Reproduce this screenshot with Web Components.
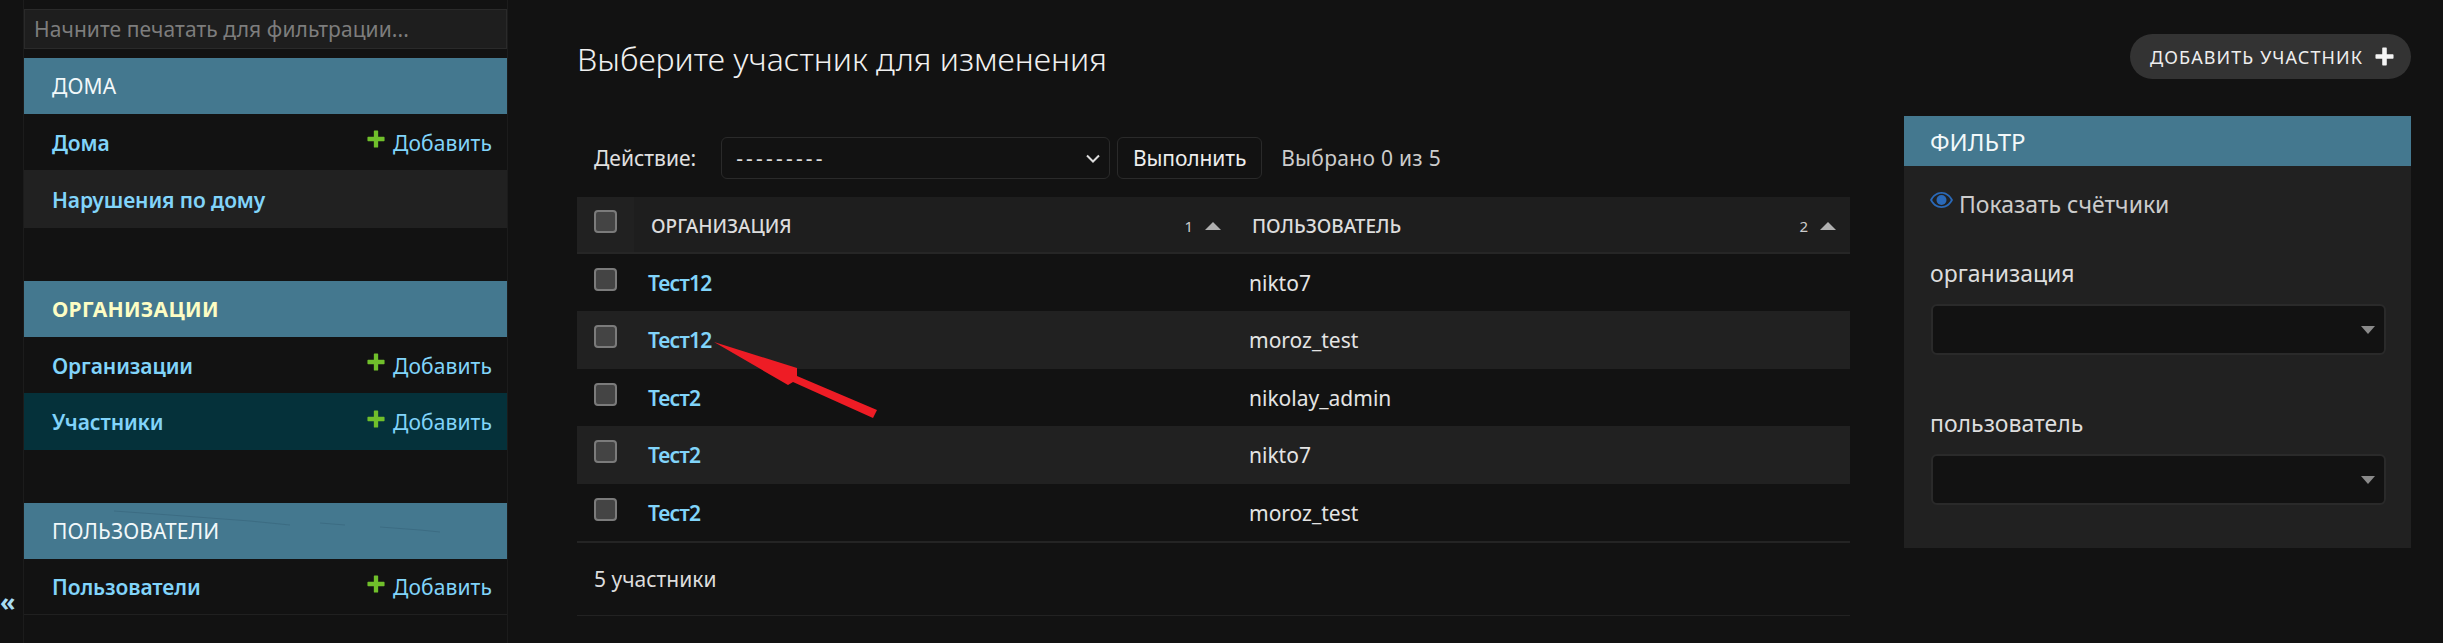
<!DOCTYPE html>
<html lang="ru"><head><meta charset="utf-8"><title>Участники</title>
<style>
html,body{margin:0;padding:0;background:#121212;}
body{width:2443px;height:643px;overflow:hidden;font-family:"Noto Sans","Open Sans",sans-serif;color:#e0e0e0;position:relative}
</style></head><body>
<admin-app>
  <admin-sidebar slot="side">
    <side-module title="ДОМА">
      <side-row label="Дома" add></side-row>
      <side-row label="Нарушения по дому" alt bold></side-row>
    </side-module>
    <side-module title="ОРГАНИЗАЦИИ" current>
      <side-row label="Организации" add></side-row>
      <side-row label="Участники" add selected></side-row>
    </side-module>
    <side-module title="ПОЛЬЗОВАТЕЛИ">
      <side-row label="Пользователи" add last></side-row>
    </side-module>
  </admin-sidebar>
  <page-header slot="head"></page-header>
  <change-list slot="list">
    <list-row org="Тест12" user="nikto7"></list-row>
    <list-row org="Тест12" user="moroz_test" alt></list-row>
    <list-row org="Тест2" user="nikolay_admin"></list-row>
    <list-row org="Тест2" user="nikto7" alt></list-row>
    <list-row org="Тест2" user="moroz_test"></list-row>
  </change-list>
  <filter-panel slot="filter"></filter-panel>
</admin-app>
<script>
const def=(n,html)=>customElements.define(n,class extends HTMLElement{
  connectedCallback(){ if(this.shadowRoot)return; const r=this.attachShadow({mode:'open'}); r.innerHTML=typeof html==='function'?html(this):html; }
});
const plus=(c,s)=>`<svg width="${s}" height="${s}" viewBox="0 0 20 20" style="display:block;flex:none"><path fill="${c}" d="M7.600 1.200c0-.4.3-.7.7-.7h3.400c.4 0 .7.3.7.7v6.400h6.400c.4 0 .7.3.7.7v3.400c0 .4-.3.7-.7.7h-6.400v6.400c0 .4-.3.7-.7.7H8.300c-.4 0-.7-.3-.7-.7v-6.400H1.200c-.4 0-.7-.3-.7-.7V8.300c0-.4.3-.7.7-.7h6.400z"/></svg>`;

def('admin-app',`<style>
:host{display:flex;height:643px;width:2443px;position:relative}
.toggle{width:24px;flex:none;display:flex;align-items:flex-end;box-sizing:border-box;padding-bottom:26px;font:700 25px/32px "Noto Sans",sans-serif;border-right:1px solid #1c1c1c}
.toggle span{color:#a8dcf2}
.side{width:484px;flex:none;box-sizing:border-box;border-right:1px solid #1c1c1c}
main{flex:1;box-sizing:border-box;padding:34px 32px 0 69px;display:flex;flex-direction:column}
.content{display:flex;gap:54px;margin-top:37px;align-items:flex-start}
.over{position:absolute;left:0;top:0;pointer-events:none}
</style>
<div class="toggle"><span>«</span></div>
<div class="side"><slot name="side"></slot></div>
<main><slot name="head"></slot><div class="content"><slot name="list"></slot><slot name="filter"></slot></div></main>
<svg class="over" width="2443" height="643">
<polygon fill="#ee1c25" points="714,342 797,368 797,376 877,410 873,418 793,382 788,385"/>
<path d="M114 511 L170 515 L250 521 L290 525 M320 523 L345 525 M380 527 L420 530 L440 532" stroke="#2f5a70" stroke-width="1" fill="none" opacity=".4"/>
</svg>`);

def('admin-sidebar',`<style>
:host{display:block;padding-top:9px;color:#e0e0e0}
input{display:block;box-sizing:border-box;width:100%;height:40px;margin:0 0 9px;background:#1e1e1e;border:1px solid #2a2a2a;color:#ddd;padding:0 9px;font:21px "Noto Sans",sans-serif;letter-spacing:.08px;outline:0}
input::placeholder{color:#7d7d7d;opacity:1}
</style><input placeholder="Начните печатать для фильтрации..."><slot></slot>`);

def('side-module',h=>`<style>
:host{display:block;margin-bottom:53px}
.cap{height:56px;background:#44788f;color:${h.hasAttribute('current')?'#fdfdc4':'#f2f8fa'};font-weight:${h.hasAttribute('current')?700:400};font-size:21px;letter-spacing:${h.hasAttribute('current')?'.3px':'.1px'};display:flex;align-items:center;padding-left:28px}
</style><div class="cap">${h.getAttribute('title')}</div><slot></slot>`);

def('side-row',h=>`<style>
:host{display:flex;align-items:center;justify-content:space-between;box-sizing:border-box;height:${h.hasAttribute('alt')?58:h.hasAttribute('selected')?57:56}px;padding:1px 15px 0 28px;
background:${h.hasAttribute('selected')?'#05313a':h.hasAttribute('alt')?'#212121':'transparent'};${h.hasAttribute('last')?'border-bottom:1px solid #202020;':''}}
a{color:#81d4fa;font-size:21px;font-weight:600;letter-spacing:-.1px}
.add{display:flex;align-items:center;color:#81d4fa;font-size:21px;letter-spacing:.1px}
.add svg{margin:-7px 8px 0 0}
</style><a>${h.getAttribute('label')}</a>${h.hasAttribute('add')?`<span class="add">${plus('#70bf2b',18)}Добавить</span>`:''}`);

def('page-header',`<style>
:host{display:flex;justify-content:space-between;align-items:center;height:45px}
h1{margin:0;font-weight:300;font-size:32px;color:#f0f0f0;line-height:58px;position:relative;top:2px}
.btn{box-sizing:border-box;height:45px;width:281px;border-radius:23px;background:#333;color:#eee;display:flex;align-items:center;padding-left:20px;font-size:18px;letter-spacing:1.1px;white-space:nowrap}
.btn svg{margin-left:12px}
</style><h1>Выберите участник для изменения</h1><div class="btn">ДОБАВИТЬ УЧАСТНИК${plus('#f4f4f4',19)}</div>`);

def('change-list',`<style>
:host{display:block;width:1273px;flex:none;padding-top:21px;font-size:21px}
.bar{display:flex;align-items:center;height:42px;margin-bottom:18px;padding-left:17px;color:#e0e0e0}
.sel{box-sizing:border-box;width:389px;height:42px;margin-left:25px;border:1px solid #2a2a2a;border-radius:6px;display:flex;align-items:center;justify-content:space-between;padding:0 9px 0 14px;letter-spacing:3.2px;color:#ddd}
.go{box-sizing:border-box;width:145px;height:42px;margin:0 18px 0 7px;background:#121212;border:1px solid #2a2a2a;border-radius:6px;display:flex;align-items:center;justify-content:center;color:#eee;letter-spacing:-.1px}
.head{display:grid;grid-template-columns:57px 601px 1fr;height:57px;background:#1e1e1e;border-bottom:2px solid #262626;box-sizing:border-box;font-size:19px;font-weight:500;color:#dcdcdc;}
.head>div{display:flex;align-items:center;padding:3px 14px 0 17px;position:relative}
.head .c{background:#212121;padding:0}
.c i{display:block;box-sizing:border-box;width:23px;height:23px;margin:0 0 7px 17px;background:#444;border:2px solid #7b7b7b;border-radius:4px}
.h1{flex:1;}
.n{font-size:15px;color:#ccc;margin-right:12px;font-weight:400}
.t{width:0;height:0;border:8px solid transparent;border-top:0;border-bottom:8px solid #b0b0b0}
.count{height:73px;display:flex;align-items:center;padding-left:17px;box-sizing:border-box;border-bottom:1px solid #222;color:#ddd}
.end{border-top:2px solid #242424}
</style>
<div class="bar"><span>Действие:</span><div class="sel"><span>---------</span><svg width="14" height="9" viewBox="0 0 14 9"><path d="M1 1.500l6 6 6-6" fill="none" stroke="#ddd" stroke-width="2"/></svg></div><div class="go">Выполнить</div><span style="color:#ccc;font-size:21px;letter-spacing:.3px;margin-left:1px">Выбрано 0 из 5</span></div>
<div class="head"><div class="c"><i></i></div><div><span class="h1">ОРГАНИЗАЦИЯ</span><span class="n">1</span><span class="t"></span></div><div><span class="h1">ПОЛЬЗОВАТЕЛЬ</span><span class="n">2</span><span class="t"></span></div></div>
<slot></slot><div class="end"></div><div class="count">5 участники</div>`);

def('list-row',h=>`<style>
:host{display:grid;grid-template-columns:57px 601px 1fr;height:${h.hasAttribute('alt')?58:57}px;align-items:center;background:${h.hasAttribute('alt')?'#212121':'transparent'};font-size:21px}
i{display:block;box-sizing:border-box;width:23px;height:23px;margin:0 0 7px 17px;background:#444;border:2px solid #7b7b7b;border-radius:4px}
a{color:#81d4fa;font-weight:600;padding-left:14px;letter-spacing:-.8px}
span{padding-left:14px;color:#e4e4e4}
</style><i></i><a>${h.getAttribute('org')}</a><span>${h.getAttribute('user')}</span>`);

const sel=`<div class="s"><b></b></div>`;
def('filter-panel',`<style>
:host{display:block;width:507px;flex:none;height:432px;background:#212121;font-size:23px;color:#ddd}
h2{margin:0;height:50px;background:#44788f;color:#f2f8fa;font-weight:400;font-size:24px;display:flex;align-items:center;padding-left:26px}
.eye{display:flex;align-items:center;margin:24px 0 0 26px;height:28px;color:#ccc;font-size:23px}
.eye svg{margin:-8px 6px 0 0;flex:none}
label{display:block;margin:41px 0 0 26px;line-height:28px}
.s{box-sizing:border-box;margin:17px 25px 0 27px;height:51px;background:#121212;border:2px solid #2a2a2a;border-radius:6px;position:relative}
.s b{position:absolute;right:9px;top:20px;width:0;height:0;border:7px solid transparent;border-bottom:0;border-top:8px solid #8a8a8a}
label.u{margin-top:54px}
</style><h2>ФИЛЬТР</h2>
<div class="eye"><svg width="23" height="16" viewBox="0 0 23 16"><path fill="#2a69b8" d="M11.500 0C6.500 0 2.500 3 0 8c2.500 5 6.500 8 11.500 8s9-3 11.500-8C20.500 3 16.500 0 11.500 0zm0 1.800c4 0 7.300 2.300 9.300 6.200-2 3.900-5.300 6.200-9.300 6.200S4.200 11.900 2.200 8c2-3.900 5.300-6.200 9.300-6.200z"/><circle cx="11.500" cy="8" r="5" fill="#2a69b8"/></svg>Показать счётчики</div>
<label>организация</label>${sel}<label class="u">пользователь</label>${sel}`);
</script>
</body></html>
